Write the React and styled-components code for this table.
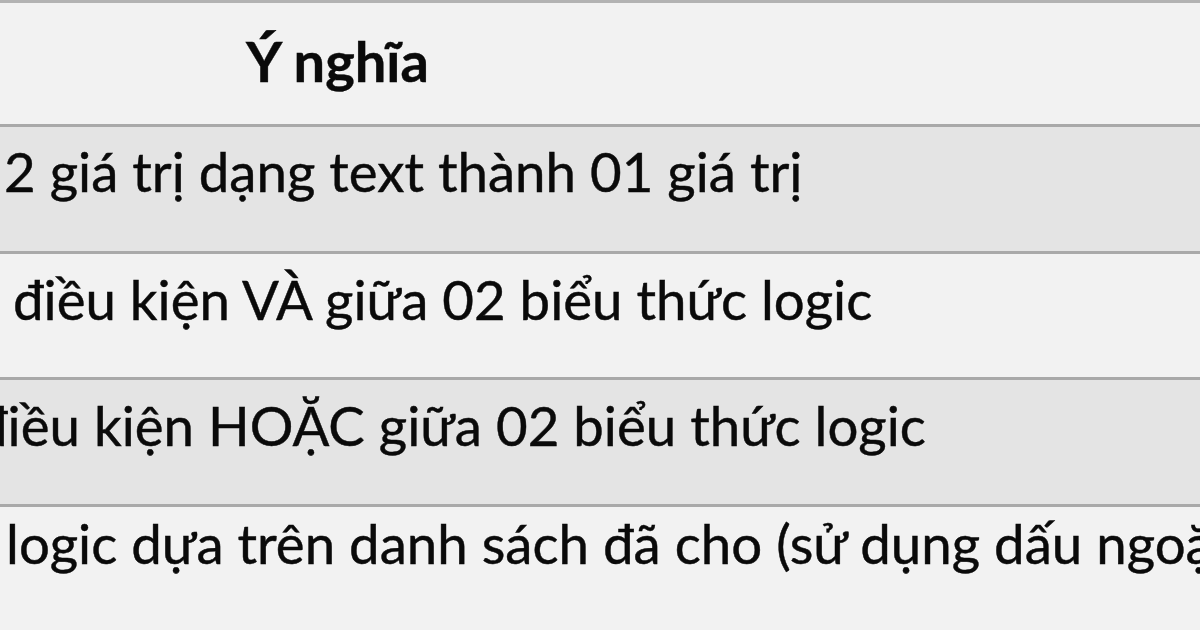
import React from "react";
import styled, { createGlobalStyle } from "styled-components";

const Global = createGlobalStyle`
  html, body { margin: 0; padding: 0; background: #f2f2f2; }
  body { width: 1200px; height: 630px; overflow: hidden; }
`;

const Table = styled.div`
  width: 1200px;
  height: 630px;
  overflow: hidden;
  display: flex;
  flex-direction: column;
  font-family: Lato, "Open Sans", "Noto Sans", sans-serif;
  color: #0a0a0a;
  background: #f2f2f2;
`;

const HeaderRow = styled.div`
  box-sizing: border-box;
  height: 124px;
  flex: none;
  border-top: 3px solid #b3b3b3;
  background: #f2f2f2;
  padding: 24px 0 0 246px;
`;

const HeaderText = styled.span`
  font-size: 56px;
  font-weight: 700;
  line-height: 1.2;
  white-space: nowrap;
  -webkit-text-stroke: 0.4px #0a0a0a;
`;

const Row = styled.div`
  box-sizing: border-box;
  height: ${(p) => p.$h}px;
  flex: none;
  border-top: 3px solid #a9a9a9;
  background: ${(p) => (p.$shade ? "#e4e4e4" : "#f2f2f2")};
  padding-top: ${(p) => p.$pad}px;
  overflow: hidden;
  white-space: nowrap;
`;

const RowText = styled.span`
  display: inline-block;
  margin-left: ${(p) => p.$x}px;
  font-size: 54.6px;
  line-height: 1.2;
  -webkit-text-stroke: 0.45px #0a0a0a;
`;

const rows = [
  { text: "2 giá trị dạng text thành 01 giá trị", x: 4, pad: 12, h: 126.5, shade: true },
  { text: "o điều kiện VÀ giữa 02 biểu thức logic", x: -32, pad: 13, h: 126.5, shade: false },
  { text: "điều kiện HOẶC giữa 02 biểu thức logic", x: -23, pad: 13, h: 126.5, shade: true },
  { text: "logic dựa trên danh sách đã cho (sử dụng dấu ngoặc)", x: 6, pad: 4, h: 130, shade: false },
];

export default function App() {
  return (
    <>
      <Global />
      <Table>
        <HeaderRow>
          <HeaderText>Ý nghĩa</HeaderText>
        </HeaderRow>
        {rows.map((r, i) => (
          <Row key={i} $h={r.h} $pad={r.pad} $shade={r.shade}>
            <RowText $x={r.x}>{r.text}</RowText>
          </Row>
        ))}
      </Table>
    </>
  );
}
